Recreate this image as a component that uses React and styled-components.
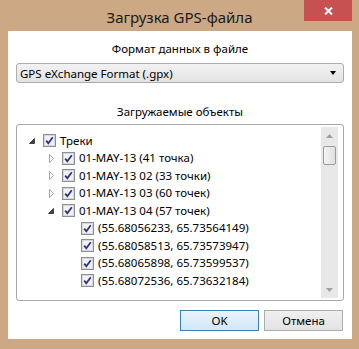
import React from 'react'
import styled, { createGlobalStyle } from 'styled-components'

const Global = createGlobalStyle`
  html, body {
    margin: 0;
    padding: 0;
    background: #cca984;
  }
  body {
    width: 359px;
    height: 349px;
    overflow: hidden;
    font-family: 'Noto Sans', 'Open Sans', sans-serif;
  }
`

const Frame = styled.div`
  width: 359px;
  height: 349px;
  display: flex;
  flex-direction: column;
  background: #cca984;
`

const TitleBar = styled.div`
  height: 31px;
  display: grid;
  grid-template-columns: 1fr auto 1fr;
`

const Title = styled.div`
  grid-column: 2;
  padding-top: 7px;
  font-size: 15px;
  line-height: 20px;
  color: #1a1a1a;
`

const CloseButton = styled.div`
  grid-column: 3;
  justify-self: end;
  width: 48px;
  height: 21px;
  margin-right: 7px;
  background: #c75050;
  display: flex;
  align-items: center;
  justify-content: center;
`

const Client = styled.div`
  margin: 0 7px 0 8px;
  height: 308px;
  background: #fff;
  padding: 10px 8px 0;
  box-sizing: border-box;
  display: flex;
  flex-direction: column;
  font-size: 11.5px;
  color: #000;
`

const Caption = styled.div`
  text-align: center;
  line-height: 16px;
  margin-top: ${p => p.top || 0}px;
`

const Combo = styled.div`
  margin-top: 6px;
  height: 20px;
  box-sizing: border-box;
  border: 1px solid #acacac;
  border-radius: 3px;
  background: linear-gradient(#f2f2f2, #e3e3e3);
  display: flex;
  align-items: center;
  justify-content: space-between;
  padding: 0 7px 0 3px;
`

const Arrow = styled.div`
  width: 0;
  height: 0;
  border-left: 3.5px solid transparent;
  border-right: 3.5px solid transparent;
  border-top: 4px solid #000;
`

const TreeBox = styled.div`
  margin-top: 4px;
  height: 177px;
  box-sizing: border-box;
  border: 1px solid #a8a8a8;
  border-radius: 3px;
  display: flex;
  padding: 2px 5px 2px 0;
  overflow: hidden;
`

const Rows = styled.div`
  flex: 1;
  padding-top: 5px;
  margin-bottom: 7px;
  overflow: hidden;
`

const Row = styled.div`
  height: 17.5px;
  display: flex;
  align-items: center;
  padding-left: ${p => 7 + p.level * 19}px;
  white-space: nowrap;
`

const Expander = styled.div`
  width: 16px;
  height: 16px;
  display: flex;
  align-items: center;
  justify-content: center;
  margin-right: 3px;
`

const Label = styled.span`
  margin-left: 4px;
  line-height: 16px;
`

const ScrollBar = styled.div`
  width: 17px;
  background: #e8e8e8;
  display: flex;
  flex-direction: column;
  align-items: center;
`

const ScrollArrow = styled.div`
  height: 17px;
  display: flex;
  align-items: center;
  justify-content: center;
`

const Thumb = styled.div`
  width: 13px;
  height: 19px;
  margin-top: 2px;
  box-sizing: border-box;
  border: 1px solid #9c9c9c;
  border-radius: 2px;
  background: linear-gradient(90deg, #f3f3f3, #e0e0e0);
`

const Track = styled.div`
  flex: 1;
`

const Buttons = styled.div`
  margin-top: 9px;
  display: flex;
  justify-content: flex-end;
  gap: 5px;
  padding-right: 1px;
`

const Button = styled.div`
  width: 79px;
  height: 21px;
  box-sizing: border-box;
  border: 1px solid ${p => (p.primary ? '#3c7fb1' : '#acacac')};
  background: ${p =>
    p.primary
      ? 'linear-gradient(#e9f3fc, #d2e7f8)'
      : 'linear-gradient(#f0f0f0, #e3e3e3)'};
  display: flex;
  align-items: center;
  justify-content: center;
  font-size: 11.5px;
`

const CheckBox = () => (
  <svg width="13" height="13" viewBox="0 0 13 13">
    <rect x="0.5" y="0.5" width="12" height="12" fill="#fff" stroke="#8e8f8f" />
    <rect x="1.5" y="1.5" width="10" height="10" fill="#f1f1f4" stroke="#d6d6dc" />
    <path d="M3.2 6.6 L5.3 9.2 L9.8 3.2" fill="none" stroke="#2d3383" strokeWidth="1.8" />
  </svg>
)

const ExpandIcon = ({ open }) =>
  open ? (
    <svg width="8" height="8" viewBox="0 0 8 8">
      <path d="M6.5 1.5 L6.5 6.5 L1.5 6.5 Z" fill="#424242" stroke="#424242" />
    </svg>
  ) : (
    <svg width="8" height="9" viewBox="0 0 8 9">
      <path d="M2.5 0.5 L6.5 4.5 L2.5 8.5 Z" fill="#fff" stroke="#a6a6a6" />
    </svg>
  )

const rows = [
  { level: 0, exp: 'open', text: 'Треки' },
  { level: 1, exp: 'closed', text: '01-MAY-13 (41 точка)' },
  { level: 1, exp: 'closed', text: '01-MAY-13 02 (33 точки)' },
  { level: 1, exp: 'closed', text: '01-MAY-13 03 (60 точек)' },
  { level: 1, exp: 'open', text: '01-MAY-13 04 (57 точек)' },
  { level: 2, text: '(55.68056233, 65.73564149)' },
  { level: 2, text: '(55.68058513, 65.73573947)' },
  { level: 2, text: '(55.68065898, 65.73599537)' },
  { level: 2, text: '(55.68072536, 65.73632184)' },
  { level: 2, text: '' },
]

const App = () => {
  return (
    <>
      <Global />
      <Frame>
        <TitleBar>
          <Title>Загрузка GPS-файла</Title>
          <CloseButton>
            <svg width="9" height="8" viewBox="0 0 9 8">
              <path d="M1 0.5 L8 7.5 M8 0.5 L1 7.5" stroke="#fff" strokeWidth="2" />
            </svg>
          </CloseButton>
        </TitleBar>
        <Client>
          <Caption>Формат данных в файле</Caption>
          <Combo>
            <span>GPS eXchange Format (.gpx)</span>
            <Arrow />
          </Combo>
          <Caption top={21}>Загружаемые объекты</Caption>
          <TreeBox>
            <Rows>
              {rows.map((r, i) => (
                <Row key={i} level={r.level}>
                  <Expander>{r.exp && <ExpandIcon open={r.exp === 'open'} />}</Expander>
                  <CheckBox />
                  {r.text && <Label>{r.text}</Label>}
                </Row>
              ))}
            </Rows>
            <ScrollBar>
              <ScrollArrow>
                <svg width="7" height="4" viewBox="0 0 7 4">
                  <path d="M0 4 L3.5 0 L7 4 Z" fill="#a0a0a0" />
                </svg>
              </ScrollArrow>
              <Thumb />
              <Track />
              <ScrollArrow>
                <svg width="7" height="4" viewBox="0 0 7 4">
                  <path d="M0 0 L3.5 4 L7 0 Z" fill="#a0a0a0" />
                </svg>
              </ScrollArrow>
            </ScrollBar>
          </TreeBox>
          <Buttons>
            <Button primary>OK</Button>
            <Button>Отмена</Button>
          </Buttons>
        </Client>
      </Frame>
    </>
  )
}

export default App
